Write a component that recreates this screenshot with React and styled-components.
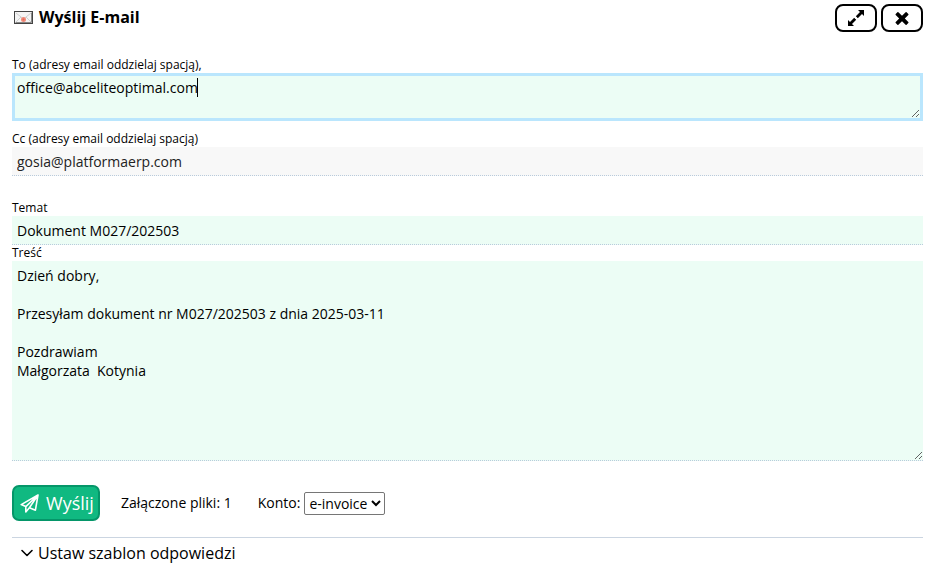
import React, { useState } from "react";
import styled, { createGlobalStyle, css } from "styled-components";

const GlobalStyle = createGlobalStyle`
  * { box-sizing: border-box; }
  body {
    margin: 0;
    background: #fff;
    color: #000;
    font: 14px/19px "Open Sans", "Noto Sans", sans-serif;
  }
`;

const Dialog = styled.main`
  padding: 4px 11px 8px 12px;
`;

const Header = styled.header`
  display: flex;
  align-items: center;
  justify-content: space-between;
  height: 28px;
  margin-bottom: 25px;
`;

const Title = styled.h1`
  display: flex;
  align-items: center;
  gap: 6px;
  margin: 0;
  padding: 0 0 2px 2px;
  font-size: 16px;
  line-height: 22px;
  font-weight: 700;
`;

const WindowButtons = styled.div`
  display: flex;
  gap: 4px;
`;

const WindowButton = styled.button`
  display: flex;
  align-items: center;
  justify-content: center;
  width: 42px;
  height: 28px;
  padding: 0;
  border: 2px solid #000;
  border-radius: 8px;
  background: #fff;
  color: #000;
`;

const Form = styled.form`
  display: flex;
  flex-direction: column;
`;

const Field = styled.div`
  display: flex;
  flex-direction: column;
  position: relative;
  margin-bottom: ${(p) => p.$gap || 0}px;
`;

const Label = styled.label`
  font-size: 12px;
  line-height: 16px;
`;

const control = css`
  display: block;
  width: 100%;
  margin: 0;
  border: 0;
  border-bottom: 1px dotted #b9cbdc;
  border-radius: 0;
  outline: 0;
  background: #ecfdf5;
  color: #000;
  font: inherit;
`;

const TextInput = styled.input`
  ${control}
  height: 29px;
  padding: 5px 5px 4px;
  &:read-only {
    background: #f8f8f8;
    color: #222;
  }
`;

const MessageArea = styled.textarea`
  ${control}
  height: 200px;
  padding: 5px;
  resize: both;
`;

const AddressArea = styled.textarea`
  ${control}
  height: 48px;
  padding: 2px;
  border: 3px solid #bae6fd;
  resize: both;
`;

const Caret = styled.span`
  position: absolute;
  left: 185px;
  bottom: 24px;
  width: 1px;
  height: 19px;
  background: #000;
`;

const Actions = styled.div`
  display: flex;
  align-items: center;
  margin: 24px 0 16px;
  line-height: 18px;
`;

const SendButton = styled.button`
  display: flex;
  align-items: center;
  justify-content: center;
  gap: 7px;
  width: 88px;
  height: 36px;
  padding: 0 0 0 2px;
  border: 2px solid #059669;
  border-radius: 7px;
  background: #10b981;
  color: #fff;
  font: 18px/24px "Open Sans", "Noto Sans", sans-serif;
`;

const Attachments = styled.span`
  margin: 0 26px 0 21px;
`;

const AccountLabel = styled.label`
  margin-right: 4px;
`;

const AccountSelect = styled.select`
  height: 23px;
  padding: 0;
  border: 1px solid #767676;
  border-radius: 2px;
  background: #fff;
  color: #000;
  font: inherit;
`;

const Template = styled.details`
  border-top: 1px solid #cbd5e1;
  padding: 4px 8px;
`;

const TemplateSummary = styled.summary`
  display: flex;
  align-items: center;
  gap: 4px;
  font-size: 16px;
  line-height: 22px;
  list-style: none;
`;

const EnvelopeIcon = () => (
  <svg width="19" height="13" viewBox="0 0 19 13" aria-hidden="true">
    <rect x=".5" y=".5" width="18" height="12" fill="#f4f4f4" stroke="#444" />
    <path d="M1.5 11.5h16v-10" fill="none" stroke="#888" />
    <path d="M2 2l7.5 6L17 2M2 11l5-5M17 11l-5-5" fill="none" stroke="#cfcfcf" />
    <circle cx="9.5" cy="8.5" r="2.5" fill="#f08a78" />
    <circle cx="9.5" cy="8.5" r="1" fill="#e2695a" />
  </svg>
);

const ExpandIcon = () => (
  <svg width="18" height="18" viewBox="0 0 18 18" aria-hidden="true">
    <path d="M11 1h6v6l-2-2-4.2 4.2-2-2L13 3zM7 17H1v-6l2 2 4.2-4.2 2 2L5 15z" fill="currentColor" />
    <path d="M8 8l2 2" stroke="#fff" strokeWidth="1.4" strokeLinecap="square" />
  </svg>
);

const CloseIcon = () => (
  <svg width="14" height="14" viewBox="0 0 14 14" aria-hidden="true">
    <path
      d="M3.4 1.2L7 4.8l3.6-3.6q.5-.4 1 0l1.7 1.7q.4.5 0 1L9.8 7.5l3.5 3.6q.4.5 0 1l-1.7 1.6q-.5.4-1 0L7 10.2l-3.6 3.5q-.5.4-1 0L.7 12.1q-.4-.5 0-1l3.5-3.6L.7 3.9q-.4-.5 0-1l1.7-1.7q.5-.4 1 0z"
      fill="currentColor"
    />
  </svg>
);

const PlaneIcon = () => (
  <svg width="19" height="19" viewBox="0 0 19 19" fill="none" stroke="currentColor" strokeWidth="1.6" strokeLinejoin="round" aria-hidden="true">
    <path d="M18 1L1.2 10.6l4.6 2L18 1l-2.6 15.2-6-2.4L18 1zM5.8 12.6V18l3.6-4.2" />
  </svg>
);

const ChevronIcon = () => (
  <svg width="14" height="10" viewBox="0 0 14 10" fill="none" stroke="currentColor" strokeWidth="1.6" strokeLinecap="round" strokeLinejoin="round" aria-hidden="true">
    <path d="M2 2.5l5 5 5-5" />
  </svg>
);

const initialMessage = `Dzień dobry,

Przesyłam dokument nr M027/202503 z dnia 2025-03-11

Pozdrawiam
Małgorzata  Kotynia`;

export default function App() {
  const [to, setTo] = useState("office@abceliteoptimal.com");
  const [subject, setSubject] = useState("Dokument M027/202503");
  const [message, setMessage] = useState(initialMessage);

  return (
    <>
      <GlobalStyle />
      <Dialog>
        <Header>
          <Title><EnvelopeIcon />Wyślij E-mail</Title>
          <WindowButtons>
            <WindowButton type="button" aria-label="Powiększ"><ExpandIcon /></WindowButton>
            <WindowButton type="button" aria-label="Zamknij"><CloseIcon /></WindowButton>
          </WindowButtons>
        </Header>
        <Form onSubmit={(e) => e.preventDefault()}>
          <Field $gap={10}>
            <Label htmlFor="to">To (adresy email oddzielaj spacją),</Label>
            <AddressArea id="to" spellCheck={false} value={to} onChange={(e) => setTo(e.target.value)} />
            <Caret />
          </Field>
          <Field $gap={24}>
            <Label htmlFor="cc">Cc (adresy email oddzielaj spacją)</Label>
            <TextInput id="cc" readOnly value="gosia@platformaerp.com" />
          </Field>
          <Field>
            <Label htmlFor="subject">Temat</Label>
            <TextInput id="subject" value={subject} onChange={(e) => setSubject(e.target.value)} />
          </Field>
          <Field>
            <Label htmlFor="message">Treść</Label>
            <MessageArea id="message" spellCheck={false} value={message} onChange={(e) => setMessage(e.target.value)} />
          </Field>
          <Actions>
            <SendButton type="submit"><PlaneIcon />Wyślij</SendButton>
            <Attachments>Załączone pliki: 1</Attachments>
            <AccountLabel htmlFor="account">Konto:</AccountLabel>
            <AccountSelect id="account"><option>e-invoice</option></AccountSelect>
          </Actions>
        </Form>
        <Template>
          <TemplateSummary><ChevronIcon />Ustaw szablon odpowiedzi</TemplateSummary>
        </Template>
      </Dialog>
    </>
  );
}
